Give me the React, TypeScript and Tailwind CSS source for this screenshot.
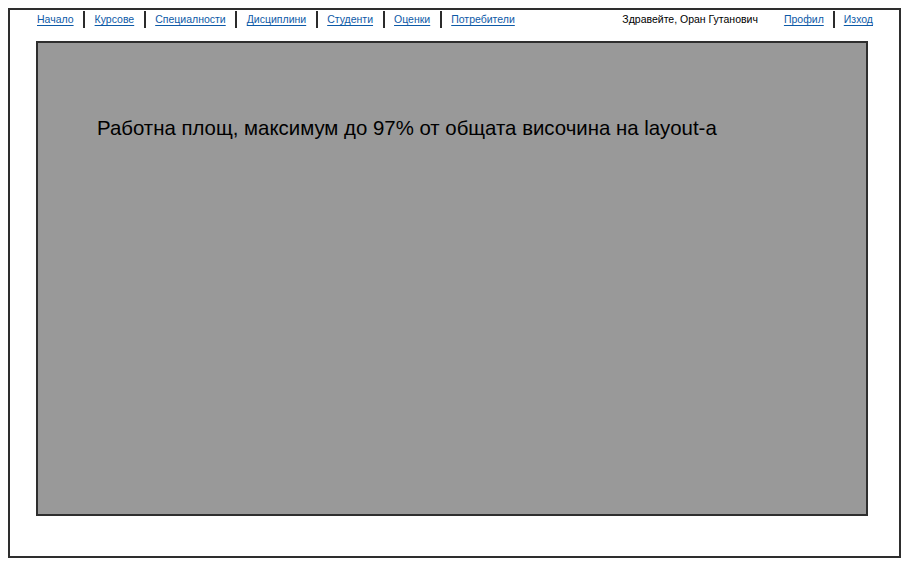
const leftLinks = ['Начало', 'Курсове', 'Специалности', 'Дисциплини', 'Студенти', 'Оценки', 'Потребители']

function Sep() {
  return <span className="h-[17px] w-[2px] bg-[#2b2b2b]" />
}

function NavLink({ label }: { label: string }) {
  return (
    <a href="#" className="text-[10.5px] leading-none text-[#0d5aa7] underline underline-offset-2">
      {label}
    </a>
  )
}

export default function App() {
  return (
    <div
      className="h-[565px] w-[907px] bg-white pl-2 pt-2"
      style={{ fontFamily: '"Liberation Sans", Arial, sans-serif' }}
    >
      <div className="flex h-[550px] w-[893px] flex-col border-2 border-[#2e2e2e] bg-white">
        <div className="flex h-[31px] items-start pl-[27px] pr-[26px] pt-[1px]">
          <div className="flex items-center gap-[9.5px]">
            {leftLinks.map((l, i) => (
              <div key={l} className="flex items-center gap-[9.5px]">
                {i > 0 && <Sep />}
                <NavLink label={l} />
              </div>
            ))}
          </div>
          <div className="ml-auto flex items-center">
            <span className="text-[10.5px] leading-none text-black">Здравейте, Оран Гутанович</span>
            <div className="ml-[26px] flex items-center gap-[9px]">
              <NavLink label="Профил" />
              <Sep />
              <NavLink label="Изход" />
            </div>
          </div>
        </div>
        <div className="ml-[26px] h-[475px] w-[832px] border-2 border-[#2e2e2e] bg-[#999999] pl-[59px] pt-[75px]">
          <p className="text-[20.4px] leading-none text-black">
            Работна площ, максимум до 97% от общата височина на layout-a
          </p>
        </div>
      </div>
    </div>
  )
}
